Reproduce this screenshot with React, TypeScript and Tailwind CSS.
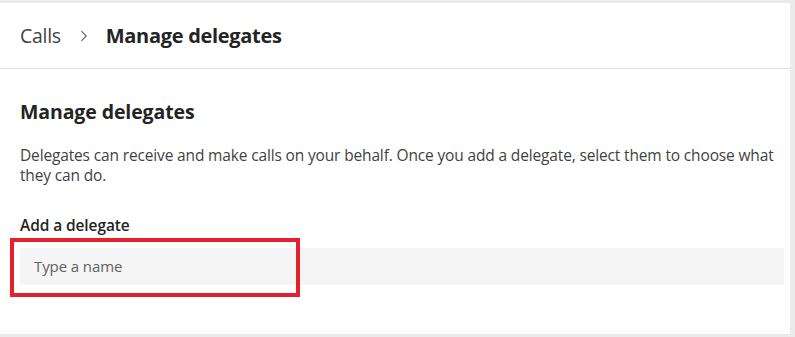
import React from 'react';

const font = { fontFamily: '"Open Sans", "Noto Sans", sans-serif' };

const App: React.FC = () => {
  return (
    <div className="w-[795px] h-[337px] bg-[#ebebeb] pt-[3px] pr-[5px] pb-[3px]" style={font}>
      <div className="relative h-full bg-white flex flex-col">
        <div className="h-[66px] shrink-0 flex items-center pl-5 border-b border-[#e0e0e0] text-[#242424]">
          <span className="text-[19.5px] text-[#424242] tracking-[-0.3px]">Calls</span>
          <svg className="ml-[19px] mr-[18px] w-[8px] h-[12px]" viewBox="0 0 8 12" fill="none">
            <path d="M1.5 1.2 L6.2 6 L1.5 10.8" stroke="#616161" strokeWidth="1.1" />
          </svg>
          <span className="text-[20px] font-bold tracking-[-0.3px]">Manage delegates</span>
        </div>
        <div className="pl-5 pr-[6px] pt-[30px]">
          <h2 className="text-[19.5px] font-bold text-[#242424] tracking-[-0.1px] leading-[26px]">Manage delegates</h2>
          <p className="mt-[20px] text-[15.5px] leading-[20px] text-[#424242] tracking-[-0.15px]">
            Delegates can receive and make calls on your behalf. Once you add a delegate, select them to choose what they can do.
          </p>
          <div className="mt-[30px] text-[15.5px] font-semibold text-[#242424] leading-[20px] tracking-[-0.1px]">Add a delegate</div>
          <div className="mt-[13px] h-[37px] bg-[#f5f5f5] flex items-center pl-[14px] text-[15px] text-[#616161] tracking-[-0.1px]">
            Type a name
          </div>
        </div>
        <div className="absolute left-[10px] top-[235px] w-[290px] h-[59px] border-[4px] border-[#e3202b]" />
      </div>
    </div>
  );
};

export default App;
